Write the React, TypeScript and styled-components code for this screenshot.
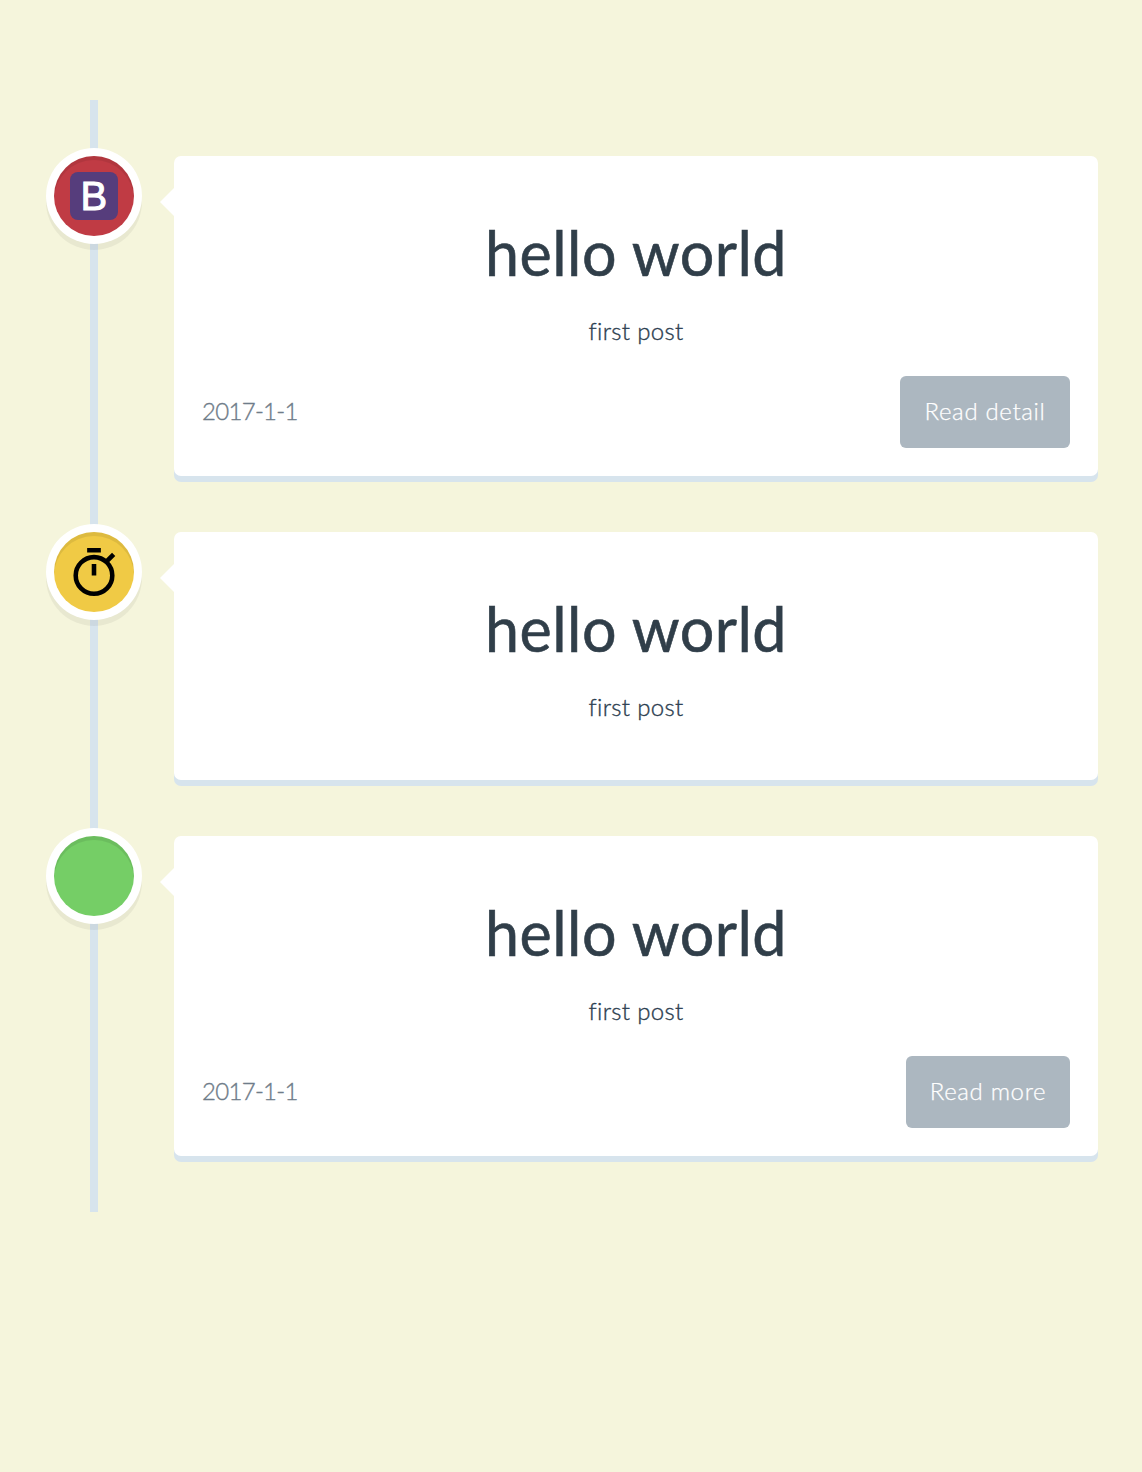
import React from "react";
import styled, { createGlobalStyle } from "styled-components";

const GlobalStyle = createGlobalStyle`
  body {
    margin: 0;
    background: #f5f5dc;
    font-family: Lato, "Open Sans", sans-serif;
    font-variant-ligatures: none;
    color: #2c3e50;
  }
`;

const Page = styled.main`
  box-sizing: border-box;
  min-height: 1472px;
  padding: 100px 44px 0 46px;
`;

const Timeline = styled.section`
  display: flex;
  flex-direction: column;
  gap: 56px;
  padding: 56px 0;
  background: linear-gradient(#d7e4ed, #d7e4ed) 44px 0 / 8px 100% no-repeat;
`;

const Entry = styled.article`
  display: grid;
  grid-template-columns: 96px 1fr;
  column-gap: 32px;
  align-items: start;
`;

const Marker = styled.div<{ $color: string }>`
  display: flex;
  align-items: center;
  justify-content: center;
  width: 80px;
  height: 80px;
  margin-left: 8px;
  border-radius: 50%;
  background: ${(p) => p.$color};
  box-shadow: 0 0 0 8px #fff, inset 0 4px 0 rgba(0, 0, 0, 0.08),
    0 6px 0 8px rgba(0, 0, 0, 0.05);
`;

const Card = styled.div`
  position: relative;
  display: flex;
  flex-direction: column;
  padding: 28px;
  border-radius: 7px;
  background: #fff;
  box-shadow: 0 6px 0 #d7e4ed;

  &::before {
    content: "";
    position: absolute;
    top: 32px;
    right: 100%;
    border: 14px solid transparent;
    border-left-width: 0;
    border-right-color: #fff;
  }
`;

const Title = styled.h2`
  margin: 27px 0 0;
  font-size: 61px;
  line-height: 84px;
  font-weight: 400;
  letter-spacing: 0.45px;
  text-align: center;
  color: #303e49;
  -webkit-text-stroke: 0.6px #303e49;
`;

const Summary = styled.p`
  margin: 16px 0 25px;
  font-size: 24px;
  line-height: 40px;
  font-weight: 300;
  letter-spacing: 0.3px;
  text-align: center;
  -webkit-text-stroke: 0.35px #2c3e50;
`;

const Footer = styled.footer`
  display: flex;
  align-items: center;
  justify-content: space-between;
`;

const PostDate = styled.time`
  font-size: 24px;
  line-height: 40px;
  font-weight: 300;
  letter-spacing: -0.7px;
  color: #6f7c89;
  -webkit-text-stroke: 0.35px #6f7c89;
  transform: translateY(-1px);
`;

const ReadButton = styled.button<{ $width: number }>`
  width: ${(p) => p.$width}px;
  height: 72px;
  padding: 0 0 2px;
  border: 0;
  border-radius: 6px;
  background: #acb7c0;
  color: #fff;
  font: 300 24px/40px Lato, sans-serif;
  letter-spacing: 0.65px;
  -webkit-text-stroke: 0.25px #fff;
`;

const Badge = styled.svg`
  display: block;
  width: 48px;
  height: 48px;
`;

const BootstrapIcon = () => (
  <Badge viewBox="0 0 48 48">
    <rect width="48" height="48" rx="8" fill="#563d7c" />
    <text x="10.6" y="38.3" fontFamily="Liberation Sans, sans-serif" fontSize="40" fill="#fff" stroke="#fff" strokeWidth="1">B</text>
  </Badge>
);

const TimerIcon = () => (
  <Badge viewBox="1.5 1 21 21" fill="none" stroke="#000" strokeWidth="2">
    <path d="M9 2h6M12 8v5M17.2 7.2l3.4-3.4" />
    <circle cx="12" cy="13" r="8" />
  </Badge>
);

interface Post {
  color: string;
  icon?: React.ReactNode;
  action?: string;
  actionWidth?: number;
}

const posts: Post[] = [
  { color: "#c03b44", icon: <BootstrapIcon />, action: "Read detail", actionWidth: 170 },
  { color: "#f0ca45", icon: <TimerIcon /> },
  { color: "#75ce66", action: "Read more", actionWidth: 164 },
];

export default function App() {
  return (
    <Page>
      <GlobalStyle />
      <Timeline>
        {posts.map((post) => (
          <Entry key={post.color}>
            <Marker $color={post.color}>{post.icon}</Marker>
            <Card>
              <Title>hello world</Title>
              <Summary>first post</Summary>
              {post.action && (
                <Footer>
                  <PostDate>2017-1-1</PostDate>
                  <ReadButton $width={post.actionWidth ?? 164}>{post.action}</ReadButton>
                </Footer>
              )}
            </Card>
          </Entry>
        ))}
      </Timeline>
    </Page>
  );
}
